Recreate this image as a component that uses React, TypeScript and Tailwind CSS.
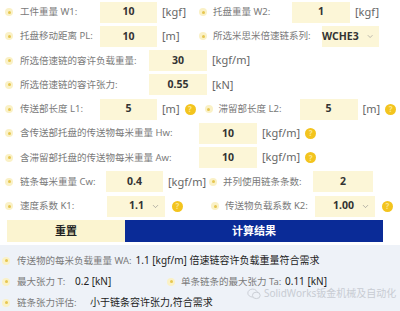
import { ChevronDown } from 'lucide-react';

const FONT = { fontFamily: '"Noto Sans", "Noto Sans CJK SC", sans-serif' };

function Dot({ className = '' }: { className?: string }) {
  return (
    <span className={`flex items-center justify-center w-[8px] h-[8px] rounded-full bg-[#faf1c6] shrink-0 ${className}`}>
      <span className="w-[3px] h-[3px] rounded-full bg-[#e6c650]" />
    </span>
  );
}

function Help({ className = '' }: { className?: string }) {
  return (
    <span className={`flex items-center justify-center w-[11px] h-[11px] rounded-full bg-[#f3c41e] text-[8px] leading-none font-bold text-[#fbe592] shrink-0 ${className}`}>
      ?
    </span>
  );
}

function Label({ text, w, className = '' }: { text: string; w: string; className?: string }) {
  return <span className={`${w} text-[9.5px] text-[#7a7a7a] whitespace-nowrap shrink-0 ${className}`}>{text}</span>;
}

function Box({ value, w = 'w-[57px]' }: { value: string; w?: string }) {
  return (
    <span className={`${w} h-[21px] bg-[#fcf6d7] flex items-center justify-center text-[10.5px] font-bold text-[#333] shrink-0`}>
      {value}
    </span>
  );
}

function Select({ value, w = 'w-[58px]' }: { value: string; w?: string }) {
  return (
    <span className={`${w} h-[21px] bg-[#fcf6d7] flex items-center justify-end gap-[7px] pr-[5px] text-[10.5px] font-bold text-[#333] shrink-0`}>
      <span>{value}</span>
      <ChevronDown size={9} strokeWidth={1.6} className="text-[#888]" />
    </span>
  );
}

function Unit({ text, className = '' }: { text: string; className?: string }) {
  return <span className={`text-[11px] text-[#666] whitespace-nowrap shrink-0 ml-[5px] ${className}`}>{text}</span>;
}

function Row({ children }: { children: React.ReactNode }) {
  return <div className="flex items-center h-[24.25px]">{children}</div>;
}

export default function App() {
  return (
    <div className="w-[400px] h-[311px] bg-white overflow-hidden relative" style={FONT}>
      <div className="pl-[5px]">
        <Row>
          <Dot />
          <Label text="工件重量 W1:" w="w-[80px]" className="ml-[7px]" />
          <Box value="10" />
          <Unit text="[kgf]" className="w-[37px]" />
          <Dot />
          <Label text="托盘重量 W2:" w="w-[79px]" className="ml-[6px]" />
          <Box value="1" w="w-[58px]" />
          <Unit text="[kgf]" />
        </Row>
        <Row>
          <Dot />
          <Label text="托盘移动距离 PL:" w="w-[80px]" className="ml-[7px]" />
          <Box value="10" />
          <Unit text="[m]" className="w-[37px]" />
          <Dot />
          <Label text="所选米思米倍速链系列:" w="w-[109px]" className="ml-[6px]" />
          <Select value="WCHE3" w="w-[57px]" />
        </Row>
        <Row>
          <Dot />
          <Label text="所选倍速链的容许负载重量:" w="w-[129px]" className="ml-[7px]" />
          <Box value="30" w="w-[58px]" />
          <Unit text="[kgf/m]" />
        </Row>
        <Row>
          <Dot />
          <Label text="所选倍速链的容许张力:" w="w-[129px]" className="ml-[7px]" />
          <Box value="0.55" w="w-[58px]" />
          <Unit text="[kN]" />
        </Row>
        <Row>
          <Dot />
          <Label text="传送部长度 L1:" w="w-[80px]" className="ml-[7px]" />
          <Box value="5" />
          <Unit text="[m]" />
          <Help className="ml-[5px]" />
          <Dot className="ml-[9px]" />
          <Label text="滞留部长度 L2:" w="w-[81px]" className="ml-[6px]" />
          <Box value="5" w="w-[58px]" />
          <Unit text="[m]" />
          <Help className="ml-[5px]" />
        </Row>
        <Row>
          <Dot />
          <Label text="含传送部托盘的传送物每米重量 Hw:" w="w-[179px]" className="ml-[7px]" />
          <Box value="10" w="w-[58px]" />
          <Unit text="[kgf/m]" />
          <Help className="ml-[5px]" />
        </Row>
        <Row>
          <Dot />
          <Label text="含滞留部托盘的传送物每米重量 Aw:" w="w-[179px]" className="ml-[7px]" />
          <Box value="10" w="w-[58px]" />
          <Unit text="[kgf/m]" />
          <Help className="ml-[5px]" />
        </Row>
        <Row>
          <Dot />
          <Label text="链条每米重量 Cw:" w="w-[86px]" className="ml-[7px]" />
          <Box value="0.4" />
          <Unit text="[kgf/m]" className="w-[38px]" />
          <Dot className="ml-[3px]" />
          <Label text="并列使用链条条数:" w="w-[90px]" className="ml-[6px]" />
          <Box value="2" w="w-[60px]" />
        </Row>
        <Row>
          <Dot />
          <Label text="速度系数 K1:" w="w-[87px]" className="ml-[7px]" />
          <Select value="1.1" />
          <Help className="ml-[7px]" />
          <Dot className="ml-[28px]" />
          <Label text="传送物负载系数 K2:" w="w-[90px]" className="ml-[6px]" />
          <Select value="1.00" w="w-[60px]" />
          <Help className="ml-[7px]" />
        </Row>
      </div>
      <div className="flex mt-[2px] pl-[7px] h-[22px]">
        <button className="w-[118px] h-full bg-[#fbf4d0] text-[11px] font-bold text-[#222]">重置</button>
        <button className="w-[258px] h-full bg-[#0a2b97] text-[11px] font-bold text-white">计算结果</button>
      </div>
      <div className="mt-[3px] bg-[#eef2f8] h-[70px] pt-[5px] pl-[2px]">
        <div className="flex items-center h-[21px]">
          <Dot />
          <span className="ml-[7px] text-[9.5px] text-[#7a7a7a] whitespace-nowrap">传送物的每米负载重量 WA:</span>
          <span className="ml-[4px] text-[10px] text-[#222] whitespace-nowrap">1.1 [kgf/m] 倍速链容许负载重量符合需求</span>
        </div>
        <div className="flex items-center h-[21px]">
          <Dot />
          <span className="ml-[7px] w-[58px] text-[9.5px] text-[#7a7a7a] whitespace-nowrap shrink-0">最大张力 T:</span>
          <span className="w-[92px] text-[10px] text-[#222] whitespace-nowrap shrink-0">0.2 [kN]</span>
          <Dot />
          <span className="ml-[6px] w-[104px] text-[9.5px] text-[#7a7a7a] whitespace-nowrap shrink-0">单条链条的最大张力 Ta:</span>
          <span className="text-[10px] text-[#222] whitespace-nowrap">0.11 [kN]</span>
        </div>
        <div className="flex items-center h-[21px]">
          <Dot />
          <span className="ml-[7px] w-[73px] text-[9.5px] text-[#7a7a7a] whitespace-nowrap shrink-0">链条张力评估:</span>
          <span className="text-[10px] text-[#222] whitespace-nowrap">小于链条容许张力,符合需求</span>
        </div>
      </div>
      <div className="absolute left-[247px] top-[286px] flex items-center gap-[3px] text-[10px] text-[#c8ccd3] whitespace-nowrap">
        <svg width="14" height="12" viewBox="0 0 15 13" fill="none" stroke="#c8ccd3" strokeWidth="1">
          <ellipse cx="6" cy="5.5" rx="5.2" ry="4.3" />
          <ellipse cx="10" cy="8" rx="4.2" ry="3.5" fill="#eef2f8" />
        </svg>
        <span>SolidWorks钣金机械及自动化</span>
      </div>
    </div>
  );
}
